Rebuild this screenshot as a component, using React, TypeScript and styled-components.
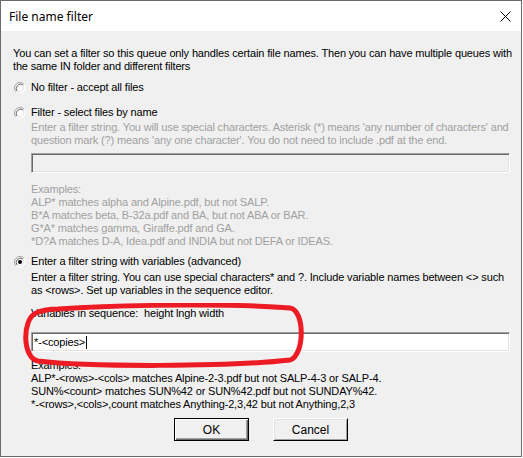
import React from "react";
import styled, { createGlobalStyle } from "styled-components";

const GlobalStyle = createGlobalStyle`
    html, body {
        margin: 0;
        padding: 0;
        background: #ffffff;
    }
`;

const Window = styled.div`
    position: relative;
    box-sizing: border-box;
    width: 522px;
    height: 457px;
    border: 1px solid #6b6b6b;
    background: #f0f0f0;
    display: flex;
    flex-direction: column;
    font-family: "Liberation Sans", Arial, sans-serif;
    font-size: 11px;
    color: #000000;
`;

const TitleBar = styled.div`
    height: 30px;
    flex: none;
    background: #ffffff;
    display: flex;
    align-items: center;
    justify-content: space-between;
    padding: 0 10px 0 8px;
`;

const Title = styled.span`
    font-family: "Noto Sans", "Open Sans", sans-serif;
    font-size: 12px;
    color: #000000;
`;

const CloseIcon = styled.svg`
    width: 11px;
    height: 11px;
    display: block;
`;

const Body = styled.div`
    display: flex;
    flex-direction: column;
    padding: 16px 12px 0 12px;
    letter-spacing: -0.15px;
`;

const Para = styled.div<{ $mt?: number; $disabled?: boolean }>`
    margin-top: ${(p) => p.$mt ?? 0}px;
    line-height: 13px;
    white-space: nowrap;
    color: ${(p) => (p.$disabled ? "#a0a0a0" : "#000000")};
`;

const Option = styled.div<{ $mt: number }>`
    margin-top: ${(p) => p.$mt}px;
    display: flex;
    align-items: center;
    gap: 5px;
    height: 13px;
    line-height: 13px;
    padding-left: 1px;
`;

const Indented = styled.div`
    display: flex;
    flex-direction: column;
    margin-left: 18px;
`;

const TextBox = styled.div<{ $mt: number; $disabled?: boolean }>`
    box-sizing: border-box;
    margin-top: ${(p) => p.$mt}px;
    height: 20px;
    width: 479px;
    display: flex;
    align-items: center;
    padding-left: 2px;
    background: ${(p) => (p.$disabled ? "#f0f0f0" : "#ffffff")};
    border-top: 1px solid #a0a0a0;
    border-left: 1px solid #a0a0a0;
    border-right: 1px solid #ffffff;
    border-bottom: 1px solid #ffffff;
    box-shadow: inset 1px 1px 0 #696969, inset -1px -1px 0 #e3e3e3;
`;

const Caret = styled.span`
    display: inline-block;
    width: 1px;
    height: 13px;
    margin-left: 1px;
    background: #000000;
`;

const ButtonRow = styled.div`
    margin-top: 7px;
    display: flex;
    justify-content: center;
    gap: 24px;
    letter-spacing: 0;
`;

const Button = styled.div<{ $default?: boolean }>`
    box-sizing: border-box;
    width: 75px;
    height: 23px;
    display: flex;
    align-items: center;
    justify-content: center;
    font-size: 12px;
    background: #f0f0f0;
    border-top: 1px solid ${(p) => (p.$default ? "#000000" : "#ffffff")};
    border-left: 1px solid ${(p) => (p.$default ? "#000000" : "#ffffff")};
    border-right: 1px solid #000000;
    border-bottom: 1px solid #000000;
    box-shadow: ${(p) =>
        p.$default
            ? "inset 1px 1px 0 #ffffff, inset -1px -1px 0 #696969, inset -2px -2px 0 #a0a0a0"
            : "inset 1px 1px 0 #e3e3e3, inset -1px -1px 0 #a0a0a0"};
`;

const Mark = styled.svg`
    position: absolute;
    left: 17px;
    top: 302px;
    width: 292px;
    height: 68px;
    pointer-events: none;
`;

function Radio({ checked }: { checked?: boolean }) {
    return (
        <svg width="12" height="12" viewBox="0 0 12 12" style={{ flex: "none" }}>
            <circle cx="6" cy="6" r="5.5" fill="#ffffff" />
            <path d="M2.1 9.9 A5.5 5.5 0 0 1 9.9 2.1" stroke="#a0a0a0" strokeWidth="1" fill="none" />
            <path d="M3 9 A4.3 4.3 0 0 1 9 3" stroke="#696969" strokeWidth="1" fill="none" />
            <path d="M9 3 A4.3 4.3 0 0 1 3 9" stroke="#e3e3e3" strokeWidth="1" fill="none" />
            {checked && <circle cx="6" cy="6" r="2" fill="#000000" />}
        </svg>
    );
}

export default function App() {
    return (
        <Window>
            <GlobalStyle />
            <TitleBar>
                <Title>File name filter</Title>
                <CloseIcon viewBox="0 0 11 11">
                    <path d="M0.5 0.5 L10.5 10.5 M10.5 0.5 L0.5 10.5" stroke="#000000" strokeWidth="1" />
                </CloseIcon>
            </TitleBar>
            <Body>
                <Para>
                    You can set a filter so this queue only handles certain file names. Then you can have multiple queues with
                    <br />
                    the same IN folder and different filters
                </Para>
                <Option $mt={8}>
                    <Radio />
                    <span>No filter - accept all files</span>
                </Option>
                <Option $mt={12}>
                    <Radio />
                    <span>Filter - select files by name</span>
                </Option>
                <Indented>
                    <Para $mt={2} $disabled>
                        Enter a filter string. You will use special characters. Asterisk (*) means 'any number of characters' and
                        <br />
                        question mark (?) means 'any one character'. You do not need to include .pdf at the end.
                    </Para>
                    <TextBox $mt={6} $disabled />
                    <Para $mt={10} $disabled>
                        Examples:
                        <br />
                        ALP* matches alpha and Alpine.pdf, but not SALP.
                        <br />
                        B*A matches beta, B-32a.pdf and BA, but not ABA or BAR.
                        <br />
                        G*A* matches gamma, Giraffe.pdf and GA.
                        <br />
                        *D?A matches D-A, Idea.pdf and INDIA but not DEFA or IDEAS.
                    </Para>
                </Indented>
                <Option $mt={7}>
                    <Radio checked />
                    <span>Enter a filter string with variables (advanced)</span>
                </Option>
                <Indented>
                    <Para $mt={3}>
                        Enter a filter string. You can use special characters* and ?. Include variable names between &lt;&gt; such
                        <br />
                        as &lt;rows&gt;. Set up variables in the sequence editor.
                    </Para>
                    <Para $mt={10}>Variables in sequence:&nbsp;&nbsp;height lngh width</Para>
                    <TextBox $mt={12}>
                        *-&lt;copies&gt;
                        <Caret />
                    </TextBox>
                    <Para $mt={7}>
                        Examples:
                        <br />
                        ALP*-&lt;rows&gt;-&lt;cols&gt; matches Alpine-2-3.pdf but not SALP-4-3 or SALP-4.
                        <br />
                        SUN%&lt;count&gt; matches SUN%42 or SUN%42.pdf but not SUNDAY%42.
                        <br />
                        *-&lt;rows&gt;,&lt;cols&gt;,count matches Anything-2,3,42 but not Anything,2,3
                    </Para>
                </Indented>
                <ButtonRow>
                    <Button $default>OK</Button>
                    <Button>Cancel</Button>
                </ButtonRow>
            </Body>
            <Mark viewBox="0 0 292 68">
                <path
                    d="M40 6 C120 1 230 1 272 5 C287 7 287 52 272 57 C210 64 70 64 20 58 C4 55 4 16 18 10 C25 7 32 6 40 6 Z"
                    stroke="#ed1c24"
                    strokeWidth="5"
                    fill="none"
                />
            </Mark>
        </Window>
    );
}
